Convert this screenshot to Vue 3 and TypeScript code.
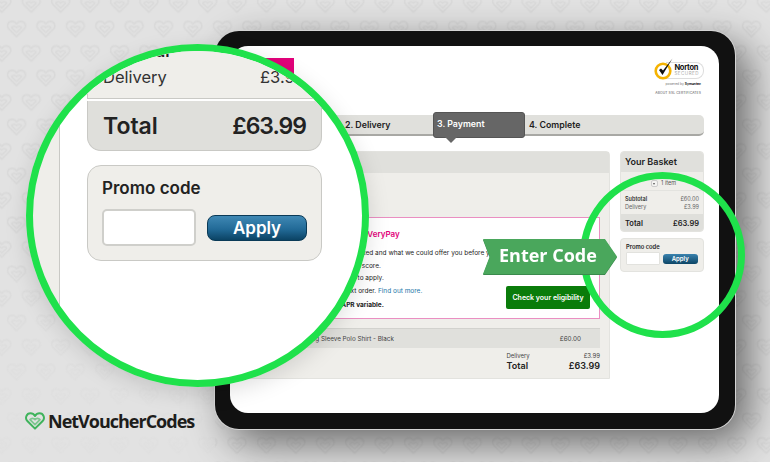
<script setup lang="ts">
const offerLines = [
  "Find out if you would be accepted and what we could offer you before you apply",
  'This will not affect your credit score.',
  'It only takes around one min to apply.',
]
</script>

<template>
  <div class="stage">
    <svg class="pattern" width="770" height="462" aria-hidden="true">
      <defs>
        <symbol id="heart" viewBox="0 0 22 20">
          <path d="M11 18.5 L2.5 10 C-0.5 7 1.5 1.5 6 1.5 C8 1.5 9.8 2.5 11 4.5 C12.2 2.5 14 1.5 16 1.5 C20.5 1.5 22.5 7 19.5 10 Z" fill="none" stroke="currentColor" stroke-width="1.8" stroke-linejoin="round" />
          <path d="M5.5 8.5 L11 14 L16.5 8.5 C15 6.5 12.5 6.5 11 8.5 C9.5 6.5 7 6.5 5.5 8.5 Z" fill="none" stroke="currentColor" stroke-width="1.6" stroke-linejoin="round" />
        </symbol>
        <pattern id="hearts" width="29.4" height="49" patternUnits="userSpaceOnUse" x="-8.7" y="-4.5">
          <use href="#heart" x="0.5" y="0" width="20" height="18" />
          <use href="#heart" x="15.2" y="24.5" width="20" height="18" />
          <use href="#heart" x="-14.2" y="24.5" width="20" height="18" />
        </pattern>
        <linearGradient id="fade" x1="0" y1="0" x2="0" y2="1">
          <stop offset="0.5" stop-color="#fff" />
          <stop offset="0.88" stop-color="#333" />
        </linearGradient>
        <mask id="fade-mask">
          <rect width="770" height="462" fill="url(#fade)" />
          <rect x="215" y="300" width="555" height="162" fill="#fff" />
        </mask>
      </defs>
      <rect width="770" height="462" fill="url(#hearts)" mask="url(#fade-mask)" />
    </svg>

    <div class="tablet">
      <div class="screen">
        <div class="top">
          <div class="brand"></div>
          <div class="norton">
            <div class="seal">
              <svg width="24" height="24" viewBox="0 0 24 24">
                <circle cx="10" cy="14" r="7.3" fill="#fff" stroke="#f5b301" stroke-width="2.6" />
                <path d="M6 13 L9.5 18 L19.5 1.5 L10 13.5 L8 11.5 Z" fill="#111" />
              </svg>
              <div class="pill">
                <b>Norton</b>
                <span>SECURED</span>
              </div>
            </div>
            <div class="powered">powered by <b>Symantec</b></div>
            <div class="about">ABOUT SSL CERTIFICATES</div>
          </div>
        </div>

        <div class="steps">
          <div class="step">2. Delivery</div>
          <div class="step current">3. Payment</div>
          <div class="step last">4. Complete</div>
        </div>

        <div class="columns">
          <div class="main">
            <div class="main-head"></div>
            <div class="main-body">
              <div class="offer">
                <div class="offer-text">
                  <div class="offer-title">Spread the cost of it with VeryPay</div>
                  <p v-for="line in offerLines" :key="line">{{ line }}</p>
                  <p>Spread the cost of your next order. <a>Find out more.</a></p>
                  <p class="strong">Representative 39.9% APR variable.</p>
                </div>
                <button class="check">Check your eligibility</button>
              </div>
              <div class="line">
                <span>Men's Classic Long Sleeve Polo Shirt - Black</span>
                <span>£60.00</span>
              </div>
              <div class="sums">
                <div class="sum-labels">
                  <span>Delivery</span>
                  <b>Total</b>
                </div>
                <div class="sum-values">
                  <span>£3.99</span>
                  <b>£63.99</b>
                </div>
              </div>
            </div>
          </div>

          <div class="side">
            <div class="basket">
              <div class="basket-head">Your Basket</div>
              <div class="items"><i class="drop"></i>1 item</div>
              <div class="rows">
                <div class="row strong-row"><span>Subtotal</span><span>£60.00</span></div>
                <div class="row"><span>Delivery</span><span>£3.99</span></div>
              </div>
              <div class="basket-total"><span>Total</span><span>£63.99</span></div>
            </div>
            <div class="promo">
              <div class="promo-title">Promo code</div>
              <div class="promo-form">
                <div class="promo-input"></div>
                <button class="promo-apply">Apply</button>
              </div>
            </div>
          </div>
        </div>
      </div>
    </div>

    <div class="ring"></div>

    <div class="arrow-wrap">
      <div class="arrow">Enter Code</div>
    </div>

    <div class="lens">
      <div class="lens-col">
        <div class="lens-rows">
          <div class="lens-row sub"><span>Subtotal</span></div>
          <div class="lens-row"><span>Delivery</span><span>£3.99</span></div>
        </div>
        <div class="lens-total"><span>Total</span><span class="price">£63.99</span></div>
        <div class="lens-promo">
          <div class="lens-promo-title">Promo code</div>
          <div class="lens-form">
            <div class="lens-input"></div>
            <button class="lens-apply">Apply</button>
          </div>
        </div>
      </div>
    </div>

    <div class="logo">
      <svg width="20" height="18" viewBox="0 0 22 20">
        <path d="M11 18.5 L2.5 10 C-0.5 7 1.5 1.5 6 1.5 C8 1.5 9.8 2.5 11 4.5 C12.2 2.5 14 1.5 16 1.5 C20.5 1.5 22.5 7 19.5 10 Z" fill="none" stroke="#3fb35c" stroke-width="2.2" stroke-linejoin="round" />
        <path d="M5.5 8.5 L11 14 L16.5 8.5 C15 6.5 12.5 6.5 11 8.5 C9.5 6.5 7 6.5 5.5 8.5 Z" fill="none" stroke="#7cc68f" stroke-width="2" stroke-linejoin="round" />
      </svg>
      <span>NetVoucherCodes</span>
    </div>
  </div>
</template>

<style>
html, body { margin: 0; padding: 0; background: #e2e2e2; }
</style>

<style scoped>
.stage {
  position: relative;
  width: 770px;
  height: 462px;
  box-sizing: border-box;
  padding: 31px 35px 33px 215px;
  overflow: hidden;
  background: #e2e2e2;
  font-family: Inter, "Liberation Sans", sans-serif;
  color: #222;
}
.pattern { position: absolute; left: 0; top: 0; color: #d9d9d9; }

.tablet {
  position: relative;
  height: 100%;
  box-sizing: border-box;
  padding: 15px 16px 16px 15px;
  background: #111;
  border-radius: 24px;
  box-shadow: 0 0 0 1px #d4d4d4, 14px 14px 42px rgba(0,0,0,.55);
}
.screen {
  height: 100%;
  box-sizing: border-box;
  padding: 0 15px;
  background: #fff;
  border-radius: 18px;
}

.top { display: flex; justify-content: space-between; height: 69px; padding-top: 12px; box-sizing: border-box; }
.brand { width: 49px; height: 32px; background: #e2007a; }
.norton { display: flex; flex-direction: column; align-items: flex-end; margin-top: 1px; }
.seal { display: flex; align-items: center; height: 22px; }
.seal svg { position: relative; z-index: 1; margin-right: -11px; margin-top: -3px; }
.pill { display: flex; flex-direction: column; padding: 1px 4px 1px 8px; border: 1px solid #ddd; border-left: 0; border-radius: 0 8px 8px 0; line-height: 1; }
.pill b { font-size: 7.5px; letter-spacing: -.3px; color: #111; }
.pill span { font-size: 4.5px; letter-spacing: .5px; color: #aaa; margin-top: 1px; }
.powered { font-size: 3.3px; color: #777; margin: 1px 3px 0 0; }
.powered b { color: #111; }
.about { font-size: 3.4px; color: #555; margin: 5px 3px 0 0; letter-spacing: .1px; }

.steps {
  display: flex;
  align-items: center;
  height: 21px;
  box-sizing: border-box;
  padding-left: 96px;
  background: #e0e0dc;
  border-bottom: 2px solid #a8a8a4;
  border-radius: 5px;
  font-size: 8.8px;
  font-weight: 600;
  color: #222;
}
.step { box-sizing: border-box; padding-left: 4px; width: 92px; }
.last { flex: 1; }
.current {
  position: relative;
  height: 26px;
  margin: 1px 0 0;
  padding: 5px 0 0 3px;
  background: #666;
  color: #fff;
  border: 1px solid #555;
  border-radius: 3px;
}
.current::after {
  content: "";
  position: absolute;
  left: 11px;
  top: 24px;
  border: 6px solid transparent;
  border-top-color: #666;
}

.columns { display: flex; gap: 10px; margin-top: 15px; align-items: flex-start; }
.main { flex: 1; height: 228px; background: #efeeea; border: 1px solid #e3e3df; border-radius: 4px 4px 0 0; box-sizing: border-box; }
.main-head { height: 21px; background: #e0e0dc; }
.main-body { padding: 44px 9px 0 10px; }
.offer {
  position: relative;
  height: 102px;
  box-sizing: border-box;
  padding: 10px 0 0 12px;
  background: #fff;
  border: 1px solid #ea8fc2;
  overflow: hidden;
}
.offer-text { white-space: nowrap; font-size: 6.5px; line-height: 12.4px; color: #222; }
.offer-title { font-size: 8px; font-weight: 600; color: #e2007a; margin-bottom: 7px; }
.offer-text p { margin: 0; }
.offer-text a { color: #1b76a8; }
.offer-text .strong { font-weight: 700; margin-top: 2px; }
.check {
  position: absolute;
  right: 9px;
  bottom: 9px;
  width: 84px;
  height: 23px;
  padding: 0;
  border: 0;
  border-radius: 2px;
  background: #0a7c0a;
  color: #fff;
  font: 600 7px Inter, sans-serif;
}
.line {
  display: flex;
  justify-content: space-between;
  align-items: center;
  height: 20px;
  margin-top: 9px;
  padding: 0 19px 0 5px;
  background: #e0e0dc;
  border-top: 1px solid #d2d2ce;
  box-sizing: border-box;
  font-size: 6.3px;
  color: #444;
}
.sums { display: flex; justify-content: flex-end; gap: 39px; margin-top: 3px; }
.sum-labels, .sum-values { display: flex; flex-direction: column; }
.sum-values { align-items: flex-end; }
.sums span { font-size: 6px; line-height: 9px; color: #444; }
.sums b { font-size: 9px; line-height: 11px; font-weight: 600; color: #222; }

.side { width: 84px; display: flex; flex-direction: column; gap: 6px; }
.basket { background: #efeeea; border: 1px solid #e3e3df; border-radius: 4px; box-sizing: border-box; height: 81px; overflow: hidden; }
.basket-head { height: 20px; padding-left: 4px; background: #e0e0dc; font-size: 9px; font-weight: 600; line-height: 20px; }
.items { display: flex; align-items: center; justify-content: flex-end; gap: 3px; height: 19px; padding: 4px 27px 0 0; font-size: 5.5px; color: #555; border-bottom: 1px solid #e3e3df; box-sizing: border-box; }
.drop { position: relative; width: 7px; height: 7px; background: #f4f4f2; border: 1px solid #ccc; border-radius: 2px; box-sizing: border-box; }
.drop::after { content: ""; position: absolute; left: 1px; top: 2px; border: 1.5px solid transparent; border-top: 2px solid #555; }
.rows { height: 23px; padding: 4px 4px 0; box-sizing: border-box; }
.row { display: flex; justify-content: space-between; font-size: 5.5px; line-height: 8px; color: #666; }
.strong-row span:first-child { color: #333; font-weight: 600; }
.basket-total { display: flex; justify-content: space-between; align-items: center; height: 18px; padding: 0 4px; background: #dfdfdb; font-size: 7.5px; font-weight: 600; }
.promo { height: 34px; box-sizing: border-box; padding: 4px 5px 0; background: #efeeea; border: 1px solid #e3e3df; border-radius: 4px; }
.promo-title { font-size: 5.8px; font-weight: 600; line-height: 7px; }
.promo-form { display: flex; align-items: center; gap: 3px; margin-top: 2px; }
.promo-input { width: 34px; height: 13px; background: #fff; border: 1px solid #e2e2de; box-sizing: border-box; border-radius: 1px; }
.promo-apply {
  width: 36px;
  height: 10px;
  padding: 0;
  border: 0;
  border-radius: 3px;
  background: linear-gradient(#3a82ae, #0c4566);
  color: #fff;
  font: 600 6px Inter, sans-serif;
}

.ring {
  position: absolute;
  left: 580px;
  top: 172px;
  width: 165px;
  height: 166px;
  box-sizing: border-box;
  border: 7px solid #1fe14b;
  border-radius: 50%;
}

.arrow-wrap { position: absolute; left: 483px; top: 239px; filter: drop-shadow(0 1px 0 #3a8a4c); }
.arrow {
  width: 134px;
  height: 35px;
  box-sizing: border-box;
  padding-left: 16px;
  background: #4aa75c;
  clip-path: polygon(0 0, 91% 0, 100% 50%, 91% 100%, 0 100%, 5% 50%);
  color: #fff;
  font-family: "Open Sans", sans-serif;
  font-size: 18px;
  font-weight: 700;
  line-height: 33px;
  white-space: nowrap;
}

.lens {
  position: absolute;
  left: 26px;
  top: 44px;
  width: 343px;
  height: 343px;
  box-sizing: border-box;
  overflow: hidden;
  border: 7px solid #1fe14b;
  border-radius: 50%;
  background: linear-gradient(90deg, #efeeea 26px, #c9c9c5 26px, #c9c9c5 27px, #fff 27px);
  box-shadow: 0 6px 22px rgba(0,0,0,.13);
}
.lens-col { width: 235px; margin-left: 54px; }
.lens-rows {
  display: flex;
  flex-direction: column;
  justify-content: flex-end;
  height: 48px;
  box-sizing: border-box;
  padding: 0 16px 8px 15px;
  background: #efeeea;
  border: 1.5px solid #c9c9c5;
  border-top: 0;
}
.lens-row { display: flex; justify-content: space-between; font-size: 16.5px; line-height: 26px; color: #333; }
.lens-row.sub { font-weight: 600; color: #222; }
.lens-total {
  display: flex;
  justify-content: space-between;
  align-items: center;
  height: 50px;
  margin-top: 2px;
  padding: 0 15px;
  box-sizing: border-box;
  background: #dfdfdb;
  border: 1.5px solid #c9c9c5;
  border-top: 0;
  border-radius: 0 0 14px 14px;
  font-size: 23px;
  font-weight: 600;
}
.price { letter-spacing: -1px; }
.lens-promo {
  height: 96px;
  margin-top: 14px;
  padding: 12px 14px 0;
  box-sizing: border-box;
  background: #efeeea;
  border: 1.5px solid #c9c9c5;
  border-radius: 14px;
}
.lens-promo-title { font-size: 17px; font-weight: 600; line-height: 20px; }
.lens-form { display: flex; align-items: center; gap: 11px; margin-top: 11px; }
.lens-input { width: 95px; height: 37px; box-sizing: border-box; background: #fff; border: 2px solid #cfcfcb; border-radius: 5px; }
.lens-apply {
  width: 101px;
  height: 26px;
  padding: 0;
  border: 1px solid #0a3a57;
  border-radius: 8px;
  background: linear-gradient(#3f88b4, #226a97 55%, #0b4364);
  color: #fff;
  font: 600 17px Inter, sans-serif;
}

.logo { position: absolute; left: 25px; top: 409px; display: flex; align-items: center; gap: 3px; height: 24px; }
.logo span { font-family: "Open Sans", sans-serif; font-size: 18px; font-weight: 700; letter-spacing: -1px; color: #1d1d1b; }
</style>
